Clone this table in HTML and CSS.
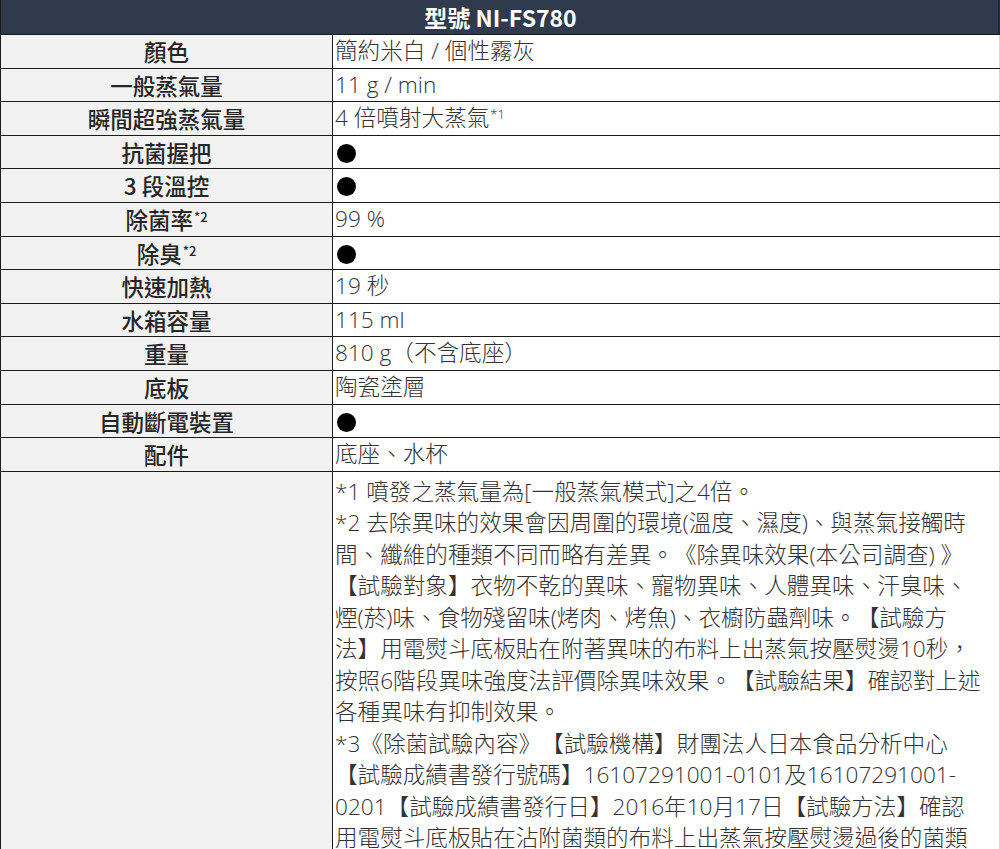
FILE: index.html
```html
<!DOCTYPE html>
<html lang="zh-Hant">
<head>
<meta charset="utf-8">
<title>型號 NI-FS780</title>
<link rel="stylesheet" href="styles.css">
</head>
<body>
<div class="spec">
  <div class="head">型號 NI-FS780</div>
  <div class="row"><div class="label">顏色</div><div class="value">簡約米白 / 個性霧灰</div></div>
  <div class="row"><div class="label">一般蒸氣量</div><div class="value">11 g / min</div></div>
  <div class="row"><div class="label">瞬間超強蒸氣量</div><div class="value">4 倍噴射大蒸氣<span class="sup">*1</span></div></div>
  <div class="row"><div class="label">抗菌握把</div><div class="value"><span class="dot"></span></div></div>
  <div class="row"><div class="label">3 段溫控</div><div class="value"><span class="dot"></span></div></div>
  <div class="row"><div class="label">除菌率<span class="sup">*2</span></div><div class="value">99 %</div></div>
  <div class="row"><div class="label">除臭<span class="sup">*2</span></div><div class="value"><span class="dot"></span></div></div>
  <div class="row"><div class="label">快速加熱</div><div class="value">19 秒</div></div>
  <div class="row"><div class="label">水箱容量</div><div class="value">115 ml</div></div>
  <div class="row"><div class="label">重量</div><div class="value">810 g（不含底座）</div></div>
  <div class="row"><div class="label">底板</div><div class="value">陶瓷塗層</div></div>
  <div class="row"><div class="label">自動斷電裝置</div><div class="value"><span class="dot"></span></div></div>
  <div class="row"><div class="label">配件</div><div class="value">底座、水杯</div></div>
  <div class="row notes-row">
    <div class="label"></div>
    <div class="value notes">
      <div class="line">*1 噴發之蒸氣量為[一般蒸氣模式]之4倍。</div>
      <div class="line">*2 去除異味的效果會因周圍的環境(溫度、濕度)、與蒸氣接觸時</div>
      <div class="line">間、纖維的種類不同而略有差異。《除異味效果(本公司調查) 》</div>
      <div class="line">【試驗對象】衣物不乾的異味、寵物異味、人體異味、汗臭味、</div>
      <div class="line">煙(菸)味、食物殘留味(烤肉、烤魚)、衣櫥防蟲劑味。【試驗方</div>
      <div class="line">法】用電熨斗底板貼在附著異味的布料上出蒸氣按壓熨燙10秒，</div>
      <div class="line">按照6階段異味強度法評價除異味效果。【試驗結果】確認對上述</div>
      <div class="line">各種異味有抑制效果。</div>
      <div class="line">*3《除菌試驗內容》【試驗機構】財團法人日本食品分析中心</div>
      <div class="line">【試驗成績書發行號碼】16107291001-0101及16107291001-</div>
      <div class="line">0201【試驗成績書發行日】2016年10月17日【試驗方法】確認</div>
      <div class="line">用電熨斗底板貼在沾附菌類的布料上出蒸氣按壓熨燙過後的菌類</div>
    </div>
  </div>
</div>
</body>
</html>
```

FILE: styles.css
```css
html, body {
  margin: 0;
  padding: 0;
  background: #ffffff;
}

body {
  font-family: "Noto Sans CJK TC", "Noto Sans", sans-serif;
  overflow: hidden;
  text-spacing-trim: space-all;
}

.spec {
  width: 1000px;
  border-left: 1px solid #1a1a1a;
  box-sizing: border-box;
}

.head {
  height: 34px;
  background: #2f3a4d;
  color: #ffffff;
  font-weight: 700;
  font-size: 23px;
  line-height: 34px;
  text-align: center;
  border-right: 2px solid #222a36;
  box-sizing: border-box;
  padding-left: 2px;
}

.row {
  display: grid;
  grid-template-columns: 332px 1fr;
  height: 33.6px;
  box-sizing: border-box;
  border-top: 1px solid #1a1a1a;
}

.label {
  background: #f2f2f2;
  border-right: 1px solid #1a1a1a;
  color: #262626;
  font-weight: 500;
  font-size: 22.5px;
  line-height: 32px;
  text-align: center;
  white-space: nowrap;
}

.value {
  font-family: "Open Sans", "Noto Sans CJK TC", sans-serif;
  color: #333333;
  font-weight: 300;
  font-size: 22.6px;
  line-height: 32px;
  padding-left: 2px;
  white-space: nowrap;
  overflow: hidden;
  border-right: 1px solid #d9d9d9;
}

.sup {
  font-size: 13px;
  vertical-align: 7px;
  line-height: 0;
  margin-left: 1px;
}

.dot {
  display: inline-block;
  width: 19px;
  height: 19px;
  border-radius: 50%;
  background: #000000;
  vertical-align: -3px;
  margin-left: 2px;
}

.notes-row {
  height: 378px;
}

.notes {
  padding-top: 4px;
}

.line {
  height: 31.5px;
  line-height: 31.5px;
}
```
